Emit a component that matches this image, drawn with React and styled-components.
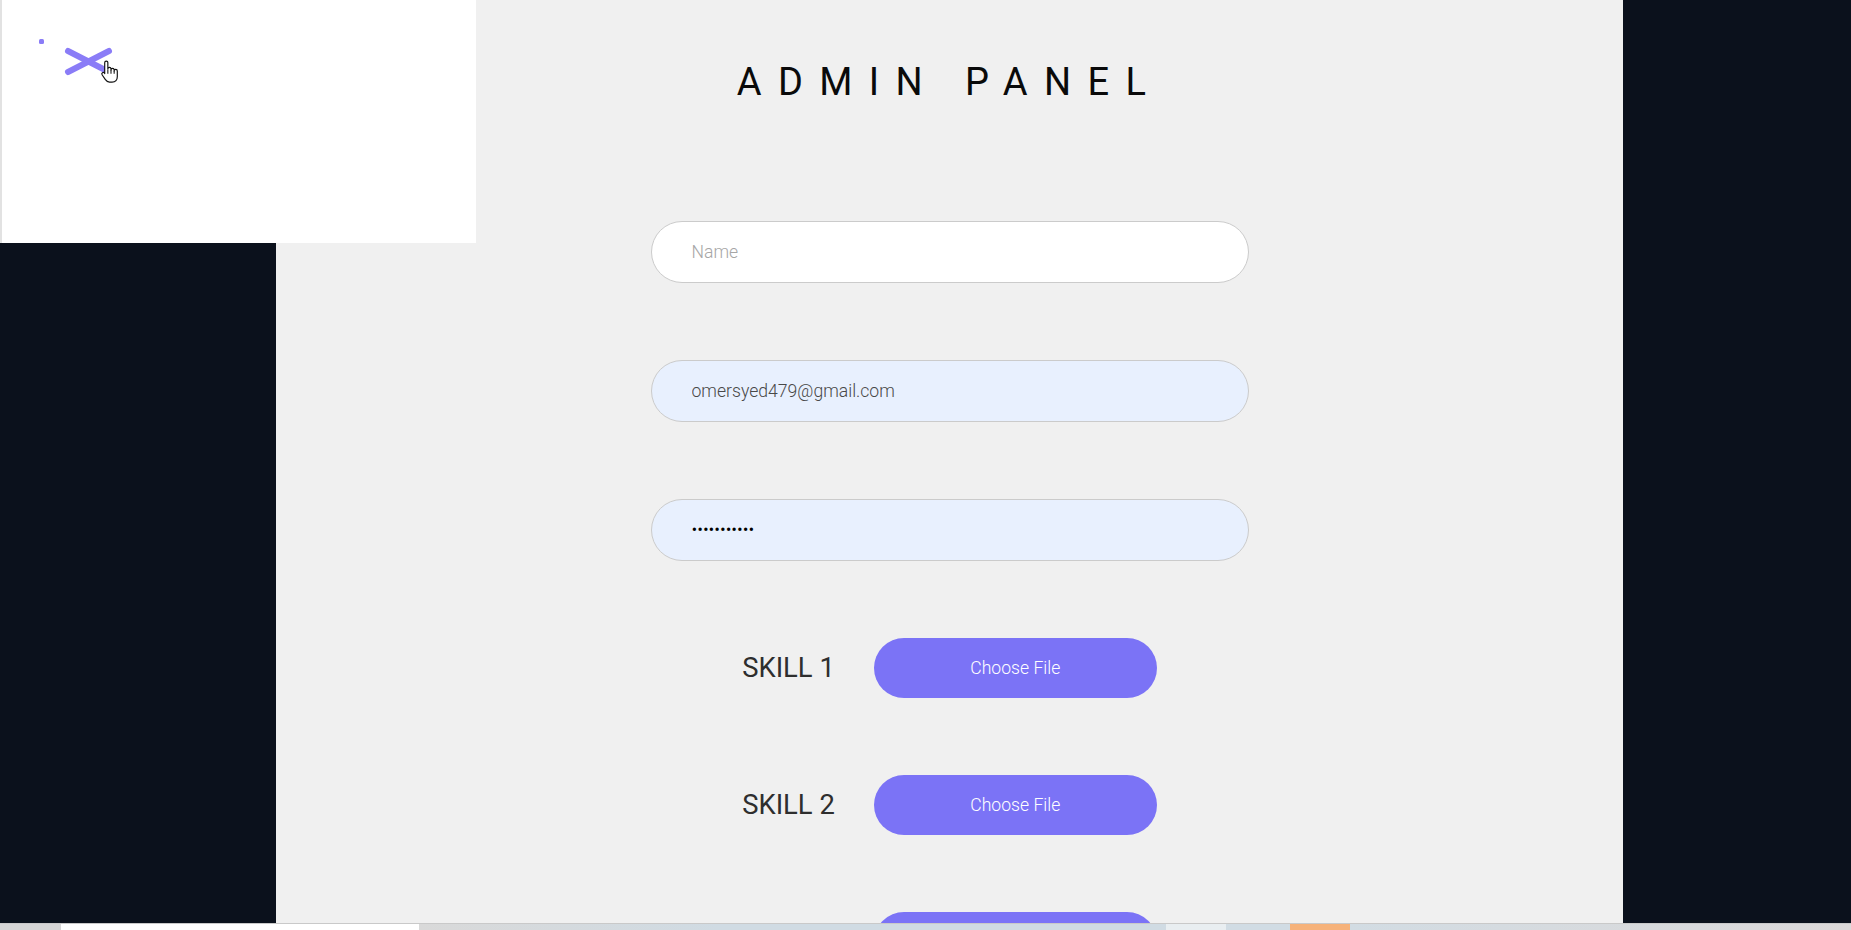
import React from 'react'
import styled, { createGlobalStyle } from 'styled-components'

const GlobalStyle = createGlobalStyle`
    * { box-sizing: border-box; }
    html, body {
        margin: 0;
        padding: 0;
        height: 100%;
        overflow: hidden;
    }
    body {
        background-color: #0b111c;
        font-family: Roboto, "Liberation Sans", sans-serif;
    }
`

const Page = styled.div`
    position: relative;
    height: 930px;
    display: flex;
    flex-direction: column;
`

const Stage = styled.div`
    flex: 1;
    min-height: 0;
    display: flex;
    padding-left: 276px;
`

const Panel = styled.main`
    width: 1347px;
    background-color: #f0f0f0;
    overflow: hidden;
    display: flex;
    flex-direction: column;
    align-items: center;
`

const Title = styled.h1`
    margin: 0;
    padding-top: 60px;
    font-size: 38px;
    font-weight: 400;
    line-height: normal;
    letter-spacing: 16.4px;
    color: #0a0a0a;
`

const Form = styled.form`
    margin-top: 117px;
    display: flex;
    flex-direction: column;
    align-items: center;
    gap: 77px;
`

const Input = styled.input`
    width: 598px;
    height: 62px;
    padding: 0 40px;
    border: 1px solid #cbcbcb;
    border-radius: 31px;
    outline: none;
    background-color: ${(props) => (props.filled ? '#e8f0fe' : '#fff')};
    font-family: Roboto, sans-serif;
    font-size: 17.6px;
    font-weight: 300;
    color: ${(props) => (props.type === 'password' ? '#000' : '#484848')};
    &::placeholder {
        color: #a6a6a6;
    }
`

const SkillRow = styled.div`
    height: 60px;
    display: flex;
    align-items: center;
    gap: 39px;
`

const SkillLabel = styled.span`
    font-size: 27.4px;
    font-weight: 400;
    color: #2e2e2e;
`

const FileButton = styled.label`
    width: 283px;
    height: 60px;
    border-radius: 30px;
    background-color: #7b73f6;
    color: #fff;
    font-size: 17.6px;
    font-weight: 300;
    display: flex;
    align-items: center;
    justify-content: center;
    cursor: pointer;
    input { display: none; }
`

const Overlay = styled.aside`
    position: absolute;
    top: 0;
    left: 0;
    width: 476px;
    height: 243px;
    background-color: #fff;
    border-left: 2px solid #e2e2e2;
    padding: 36px 0 0 34px;
`

const CloseButton = styled.button`
    display: block;
    padding: 0;
    border: none;
    background: none;
    cursor: pointer;
`

const TaskStrip = styled.div`
    height: 7px;
    display: flex;
    border-top: 1px solid #c9c9c9;
`

const Segment = styled.div`
    width: ${(props) => props.w ? props.w + 'px' : 'auto'};
    flex: ${(props) => (props.w ? 'none' : '1')};
    background: ${(props) => props.bg};
`

const segments = [
    { w: 61, bg: '#d6d6d6' },
    { w: 358, bg: '#ffffff' },
    { w: 747, bg: 'linear-gradient(90deg, #d9d9d9, #d0dbe3 40%, #d0dbe3)' },
    { w: 60, bg: '#e9eef1' },
    { w: 64, bg: '#d1dce4' },
    { w: 60, bg: '#f6b27a' },
    { bg: 'linear-gradient(90deg, #d2dce3, #dcd9d9)' },
]

function CloseIcon() {
    return (
        <svg width="90" height="52" viewBox="0 0 90 52">
            <rect x="3" y="3" width="5" height="5" rx="1.5" fill="#8a7cf7" />
            <g stroke="#8a7cf7" strokeWidth="6" strokeLinecap="round">
                <line x1="32" y1="15" x2="73" y2="36" />
                <line x1="32" y1="36" x2="73" y2="15" />
            </g>
            <g transform="translate(64.5 24) scale(1.05)">
                <path
                    d="M4 10 V2.5 A1.5 1.5 0 0 1 7 2.5 V8.5 A1.5 1.5 0 0 1 10 8.5 V9.5 A1.5 1.5 0 0 1 13 9.5 V10.5 A1.5 1.5 0 0 1 16 10.5 V16 C16 19 14 21 11 21 H8.5 C6.5 21 5.5 20 4.5 18.5 L1.5 14 A1.4 1.4 0 0 1 3.8 12.4 L4 13 Z"
                    fill="#fff"
                    stroke="#111"
                    strokeWidth="1.1"
                    strokeLinejoin="round"
                />
                <path d="M7 9 V13 M10 9.5 V13 M13 10.5 V13" stroke="#111" strokeWidth="1" />
            </g>
        </svg>
    )
}

export default function App() {
    const skills = [1, 2, 3]
    return (
        <>
            <GlobalStyle />
            <Page>
                <Stage>
                    <Panel>
                        <Title>ADMIN PANEL</Title>
                        <Form onSubmit={(e) => e.preventDefault()}>
                            <Input type="text" placeholder="Name" />
                            <Input type="email" filled defaultValue="omersyed479@gmail.com" />
                            <Input type="password" filled defaultValue="omersyed479" />
                            {skills.map((n) => (
                                <SkillRow key={n}>
                                    <SkillLabel>SKILL {n}</SkillLabel>
                                    <FileButton>
                                        Choose File
                                        <input type="file" />
                                    </FileButton>
                                </SkillRow>
                            ))}
                        </Form>
                    </Panel>
                </Stage>
                <TaskStrip>
                    {segments.map((s, i) => (
                        <Segment key={i} w={s.w} bg={s.bg} />
                    ))}
                </TaskStrip>
                <Overlay>
                    <CloseButton type="button" aria-label="close">
                        <CloseIcon />
                    </CloseButton>
                </Overlay>
            </Page>
        </>
    )
}
